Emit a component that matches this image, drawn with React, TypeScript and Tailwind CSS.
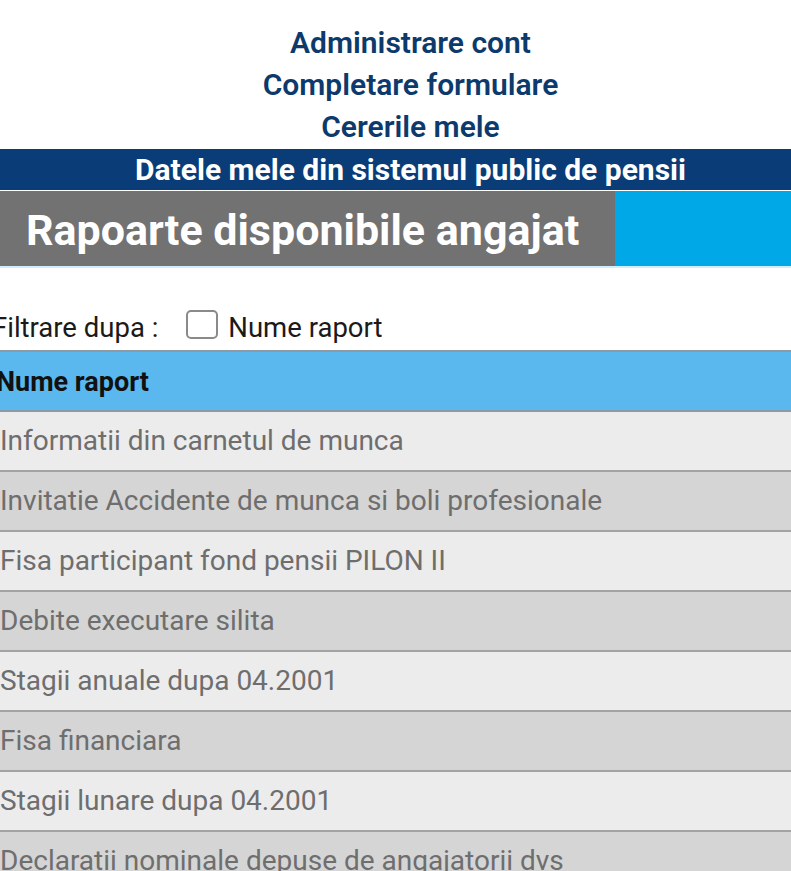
import React from 'react';

const rapoarte = [
  'Informatii din carnetul de munca',
  'Invitatie Accidente de munca si boli profesionale',
  'Fisa participant fond pensii PILON II',
  'Debite executare silita',
  'Stagii anuale dupa 04.2001',
  'Fisa financiara',
  'Stagii lunare dupa 04.2001',
  'Declaratii nominale depuse de angajatorii dvs',
];

const meniu = ['Administrare cont', 'Completare formulare', 'Cererile mele'];

const App: React.FC = () => {
  return (
    <div className="w-[791px] h-[871px] overflow-hidden bg-white font-['Roboto',sans-serif]">
      <div className="pt-[22px] pl-[30px] flex flex-col items-center">
        {meniu.map((item) => (
          <div key={item} className="h-[42px] leading-[42px] text-[30px] font-semibold text-[#0d3a6c]">
            {item}
          </div>
        ))}
      </div>
      <div className="mt-[1px] pl-[30px] h-[41px] bg-[#0a3c78] flex items-center justify-center text-white text-[30px] font-bold">
        Datele mele din sistemul public de pensii
      </div>
      <div className="mt-[1px] flex h-[77px] border-b-2 border-[#cfeefb]">
        <div className="w-[615px] bg-[#727272] flex items-center pl-[26px] pt-[3px] text-white text-[43px] font-bold">
          Rapoarte disponibile angajat
        </div>
        <div className="flex-1 bg-[#00a8e8]" />
      </div>
      <div className="h-[82px] flex items-center pt-[37px] text-[27.5px] text-[#1a1a1a]">
        <span className="-ml-[8px] whitespace-nowrap">Filtrare dupa :</span>
        <span className="ml-[28px] shrink-0 w-[32px] h-[29px] -mt-[6px] rounded-[5px] border-2 border-[#8a8a8a] bg-white" />
        <span className="ml-[10px] whitespace-nowrap">Nume raport</span>
      </div>
      <div className="border-y-2 border-[#8c9aa6] bg-[#5ab8ee] h-[62px] flex items-center pt-[2px]">
        <span className="-ml-[4px] text-[27px] font-bold text-[#111]">Nume raport</span>
      </div>
      {rapoarte.map((r, i) => (
        <div
          key={r}
          className={`h-[60px] flex items-center border-b-2 border-[#a3a3a3] text-[28px] text-[#6e6e6e] ${
            i % 2 === 0 ? 'bg-[#ececec]' : 'bg-[#d5d5d5]'
          }`}
        >
          <span className="whitespace-nowrap">{r}</span>
        </div>
      ))}
    </div>
  );
};

export default App;
